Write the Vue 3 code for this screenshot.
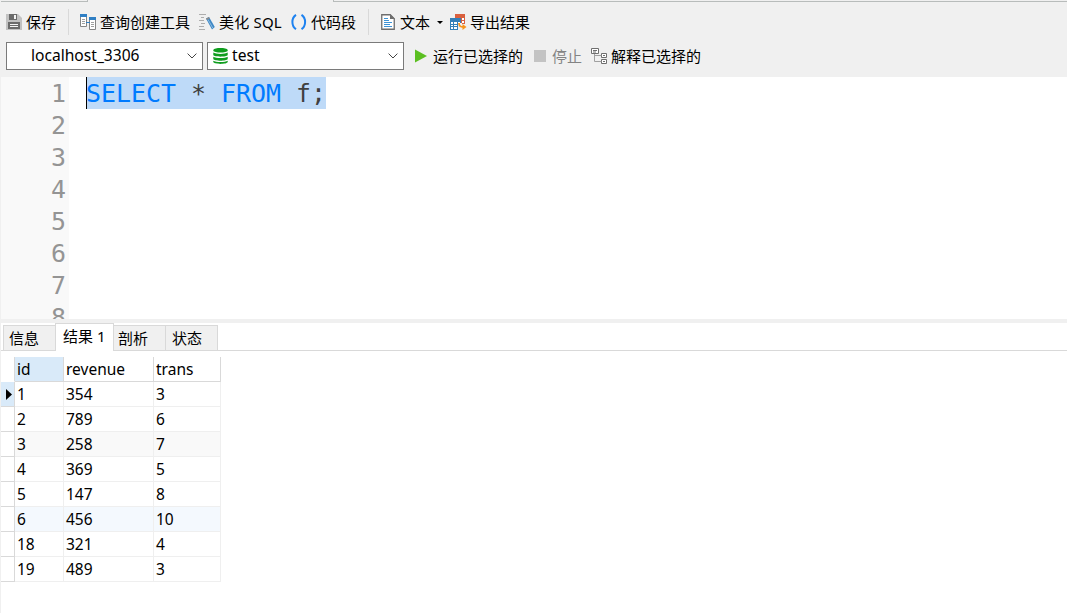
<script setup>
import { ref } from 'vue';

const lineas = [1, 2, 3, 4, 5, 6, 7, 8];

const tabs = ref([
  { nombre: '信息', clase: 'tab_info' },
  { nombre: '结果 1', clase: 'tab_activa' },
  { nombre: '剖析', clase: 'tab_perfil' },
  { nombre: '状态', clase: 'tab_estado' },
]);

const filas = ref([
  { id: 1, revenue: 354, trans: 3 },
  { id: 2, revenue: 789, trans: 6 },
  { id: 3, revenue: 258, trans: 7 },
  { id: 4, revenue: 369, trans: 5 },
  { id: 5, revenue: 147, trans: 8 },
  { id: 6, revenue: 456, trans: 10 },
  { id: 18, revenue: 321, trans: 4 },
  { id: 19, revenue: 489, trans: 3 },
]);
</script>

<template>
  <div class="ventana">
    <div class="borde_superior">
      <div class="borde_izq"></div>
      <div class="borde_der"></div>
    </div>

    <div class="barra">
      <div class="boton guardar">
        <svg width="16" height="16" viewBox="0 0 16 16">
          <path d="M0 0h12l4 4v12H0z" fill="#c2c2c2" />
          <path d="M3 0h8v6H3zM2 8h12v7H2z" fill="#6b6b6b" />
          <path d="M8 1h2v4H8zM4 10h8v1H4zM4 12h8v1H4z" fill="#f4f4f4" />
        </svg>
        <span>保存</span>
      </div>
      <div class="separador"></div>
      <div class="boton constructor">
        <svg width="17" height="16" viewBox="0 0 17 16">
          <path d="M1.500 .5h6v12h-6zM10.500 3.500h6v12h-6z" fill="#fff" stroke="#858585" />
          <path d="M1 0h7v3H1zM10 3h7v3h-7z" fill="#2f7fc4" />
          <path d="M3 5.500h3M3 7.500h3M3 9.500h3M12 8.500h3M12 10.500h3M12 12.500h3" stroke="#a0a0a0" />
          <path d="M7 8.500h4" stroke="#2f7fc4" />
        </svg>
        <span>查询创建工具</span>
      </div>
      <div class="boton embellecer">
        <svg width="17" height="16" viewBox="0 0 17 16">
          <path d="M1 .5h7M3 3.500h3M1 6.500h5M3 9.500h4M1 12.500h5M1 15.500h6" stroke="#adadad" />
          <path d="M8 4.500l3-1.500 5.800 10-2.800 2.500z" fill="#3f88c5" />
          <path d="M10 5.500l4.800 8.500" stroke="#8bbce3" />
          <path d="M8 4.500l3-1.500.8 1.400-3 1.600z" fill="#8a8a8a" />
        </svg>
        <span>美化 SQL</span>
      </div>
      <div class="boton fragmento">
        <svg width="16" height="16" viewBox="0 0 16 16" fill="none" stroke="#1e82f0" stroke-width="2">
          <path d="M5 .8C.2 4 .2 12 5 15.200M10.500 .8C15.300 4 15.300 12 10.500 15.200" />
        </svg>
        <span>代码段</span>
      </div>
      <div class="separador"></div>
      <div class="boton texto">
        <svg width="14" height="16" viewBox="0 0 14 16">
          <path d="M.75 .75h8.500l4 4v10.500H.75z" fill="#fff" stroke="#6e6e6e" stroke-width="1.300" />
          <path d="M9 0l5 5H9z" fill="#6e6e6e" />
          <path d="M3 4.500h4M3 6.500h5M3 8.500h8M3 10.500h6M3 12.500h8" stroke="#3d93d6" />
        </svg>
        <span>文本</span>
        <svg class="flecha_menu" width="6" height="3" viewBox="0 0 6 3">
          <path d="M0 0h6L3 3z" fill="#000" />
        </svg>
      </div>
      <div class="boton exportar">
        <svg width="17" height="16" viewBox="0 0 17 16">
          <path d="M5 0h10v10H5z" fill="#d9603f" />
          <path d="M6 4h2v1H6zM9 4h2v2H9zM12 4h2v2h-2zM12 7h2v2h-2z" fill="#fff" />
          <path d="M0 4h11v12H0z" fill="#347fb8" />
          <path d="M1 8h2v2H1zM4 8h3v2H4zM8 8h2v2H8zM1 11h2v1H1zM4 11h3v1H4zM1 13h2v2H1zM4 13h3v2H4z" fill="#fff" />
          <path d="M8 9h4v7H8z" fill="#f0f0f0" />
          <path d="M9 9c0 3.500 1.500 4 4.500 4" fill="none" stroke="#f7941d" stroke-width="1.800" />
          <path d="M12.500 10l4 3-4 3z" fill="#f7941d" />
        </svg>
        <span>导出结果</span>
      </div>
    </div>

    <div class="barra barra_conexion">
      <div class="selector selector_servidor">
        <span>localhost_3306</span>
        <svg class="flecha" width="10" height="6" viewBox="0 0 10 6">
          <path d="M.6 .6L5 5 9.400 .6" fill="none" stroke="#444" />
        </svg>
      </div>
      <div class="selector selector_base">
        <svg width="15" height="16" viewBox="0 0 15 16" fill="#0f9d1e">
          <path d="M.3 2c1-2.600 13.400-2.600 14.400 0v.7c-1 2.400-13.400 2.400-14.400 0z" />
          <path d="M.3 4.600c2.500 1.700 11.900 1.700 14.400 0v2.400c-1 2.200-13.400 2.200-14.400 0z" />
          <path d="M.3 8.800c2.500 1.700 11.900 1.700 14.400 0v2.300c-1 2.200-13.400 2.200-14.400 0z" />
          <path d="M.3 12.700c2.500 1.700 11.900 1.700 14.400 0v1.400c-1 2.500-13.400 2.500-14.400 0z" />
        </svg>
        <span>test</span>
        <svg class="flecha" width="10" height="6" viewBox="0 0 10 6">
          <path d="M.6 .6L5 5 9.400 .6" fill="none" stroke="#444" />
        </svg>
      </div>
      <div class="boton ejecutar">
        <svg width="12" height="14" viewBox="0 0 12 14">
          <path d="M0 .5v13L12 7z" fill="#5bbf21" />
        </svg>
        <span>运行已选择的</span>
      </div>
      <div class="boton detener">
        <svg width="12" height="12" viewBox="0 0 12 12">
          <path d="M0 0h12v12H0z" fill="#c3c3c3" />
        </svg>
        <span>停止</span>
      </div>
      <div class="boton explicar">
        <svg width="16" height="16" viewBox="0 0 16 16" fill="none" stroke="#6f6f6f">
          <path d="M.5 .5h7v5h-7zM10.500 5.500h5v4h-5zM10.500 11.500h5v4h-5z" fill="#fff" />
          <path d="M2 2.500h4M2 4h3M12 7.500h2M12 13.500h2" />
          <path d="M3.500 6v7.500h7M3.500 7.500h7" stroke="#a0a0a0" />
        </svg>
        <span>解释已选择的</span>
      </div>
    </div>

    <div class="editor">
      <div class="numeros">
        <div v-for="n in lineas" :key="n">{{ n }}</div>
      </div>
      <div class="codigo"><span class="seleccion"><b>SELECT</b> * <b>FROM</b> f;</span></div>
    </div>

    <div class="divisor"></div>

    <div class="tabs">
      <div v-for="tab in tabs" :key="tab.nombre" class="tab" :class="tab.clase">{{ tab.nombre }}</div>
      <div class="tabs_resto"></div>
    </div>

    <div class="resultado">
      <div class="fila cabecera">
        <div class="marca"></div>
        <div class="col_id">id</div>
        <div class="col_revenue">revenue</div>
        <div class="col_trans">trans</div>
      </div>
      <div v-for="(fila, i) in filas" :key="fila.id" class="fila" :class="{ gris: i === 2, azul: i === 5 }">
        <div class="marca" :class="{ actual: i === 0 }">
          <svg v-if="i === 0" width="6" height="11" viewBox="0 0 6 11">
            <path d="M0 0v11l6-5.500z" fill="#000" />
          </svg>
        </div>
        <div class="col_id">{{ fila.id }}</div>
        <div class="col_revenue">{{ fila.revenue }}</div>
        <div class="col_trans">{{ fila.trans }}</div>
      </div>
    </div>
  </div>
</template>

<style>
body {
  margin: 0;
  overflow: hidden;
}
</style>

<style scoped>
* {
  box-sizing: border-box;
}

.ventana {
  width: 1067px;
  height: 613px;
  display: flex;
  flex-direction: column;
  background-color: #f0f0f0;
  color: #000;
  font-family: "Noto Sans", "Noto Sans CJK SC", sans-serif;
  font-size: 15px;
  white-space: nowrap;
}

svg {
  display: block;
  flex: none;
}

.borde_superior {
  display: flex;
  justify-content: space-between;
  height: 2px;
}

.borde_izq {
  width: 87px;
  margin-left: 1px;
  border-bottom: 1px solid #b8bcbb;
  border-right: 1px solid #b8bcbb;
}

.borde_der {
  width: 734px;
  border-bottom: 1px solid #b8bcbb;
  border-left: 1px solid #b8bcbb;
}

.barra {
  display: flex;
  align-items: center;
  height: 40px;
  padding-left: 6px;
}

.boton {
  display: flex;
  align-items: center;
  flex: none;
  gap: 4px;
  line-height: 22px;
}

.guardar {
  width: 62px;
}

.separador {
  width: 1px;
  height: 26px;
  background-color: #d9d9d9;
}

.constructor {
  width: 119px;
  margin-left: 10px;
}

.embellecer {
  width: 93px;
}

.embellecer span {
  letter-spacing: 0.2px;
}

.fragmento {
  width: 77px;
}

.texto {
  width: 69px;
  margin-left: 12px;
  gap: 5px;
}

.flecha_menu {
  margin-left: 2px;
}

.exportar {
  gap: 3px;
}

.barra_conexion {
  height: 35px;
  padding-bottom: 7px;
}

.selector {
  display: flex;
  align-items: center;
  flex: none;
  width: 197px;
  height: 28px;
  margin-right: 4px;
  border: 1px solid #7a7a7a;
  background-color: #fff;
  font-size: 15.600px;
  line-height: 22px;
}

.selector span {
  padding-bottom: 2px;
}

.selector_servidor {
  padding-left: 24px;
}

.selector_base {
  padding-left: 5px;
}

.selector_base span {
  margin-left: 4px;
}

.flecha {
  margin-left: auto;
  margin-right: 5px;
}

.ejecutar {
  width: 119px;
  margin-left: 7px;
  gap: 6px;
}

.detener {
  width: 57px;
  gap: 6px;
  color: #838383;
}

.editor {
  display: flex;
  height: 242px;
  margin-left: 1px;
  overflow: hidden;
  background-color: #fff;
  font-family: "DejaVu Sans Mono", monospace;
  font-size: 24.920px;
  line-height: 34px;
}

.numeros {
  width: 68px;
  padding-right: 3px;
  background-color: #f9f9f9;
  color: #949494;
  text-align: right;
}

.numeros div {
  height: 32px;
}

.codigo {
  height: 32px;
  margin-left: 17px;
  border-left: 1px solid #000;
  color: #404040;
}

.seleccion {
  display: block;
  width: 239px;
  height: 32px;
  background-color: #bedaf8;
  text-indent: -1px;
  white-space: pre;
}

.seleccion b {
  color: #007bff;
  font-weight: normal;
}

.divisor {
  height: 4px;
}

.tabs {
  display: flex;
  align-items: flex-end;
  height: 28px;
  margin-left: 1px;
  padding-left: 2px;
  background: linear-gradient(#d9d9d9, #d9d9d9) left bottom / 2px 1px no-repeat #fff;
}

.tab {
  height: 26px;
  border: 1px solid #d9d9d9;
  border-left: none;
  background-color: #f0f0f0;
  line-height: 24px;
}

.tab_info {
  width: 52px;
  padding-left: 5px;
  border-left: 1px solid #d9d9d9;
  border-right: none;
}

.tab_activa {
  width: 59px;
  height: 28px;
  padding-left: 7px;
  border-left: 1px solid #d9d9d9;
  border-bottom: none;
  background-color: #fff;
}

.tab_perfil {
  width: 52px;
  padding-left: 4px;
}

.tab_estado {
  width: 52px;
  padding-left: 6px;
}

.tabs_resto {
  flex: 1;
  height: 1px;
  background-color: #d9d9d9;
}

.resultado {
  flex: 1;
  margin-left: 1px;
  padding-top: 6px;
  background-color: #fff;
  font-size: 15.500px;
}

.fila {
  display: flex;
  width: 220px;
  height: 25px;
  line-height: 24px;
}

.fila > div {
  border-right: 1px solid #efefef;
  border-bottom: 1px solid #efefef;
}

.fila .marca {
  display: flex;
  align-items: center;
  width: 14px;
  padding-left: 5px;
  border-color: #d9d9d9;
  background-color: #fff;
}

.fila .actual {
  background-color: #d9eaf9;
}

.fila .col_id {
  width: 49px;
  padding-left: 2px;
}

.fila .col_revenue {
  width: 90px;
  padding-left: 2px;
}

.fila .col_trans {
  width: 67px;
  padding-left: 2px;
}

.cabecera > div {
  border-color: #d9d9d9;
}

.cabecera .marca {
  border-bottom-color: #fff;
}

.cabecera .col_id {
  background-color: #d9eaf9;
}

.gris {
  background-color: #f9f9f9;
}

.azul {
  background-color: #f4f9fe;
}
</style>
